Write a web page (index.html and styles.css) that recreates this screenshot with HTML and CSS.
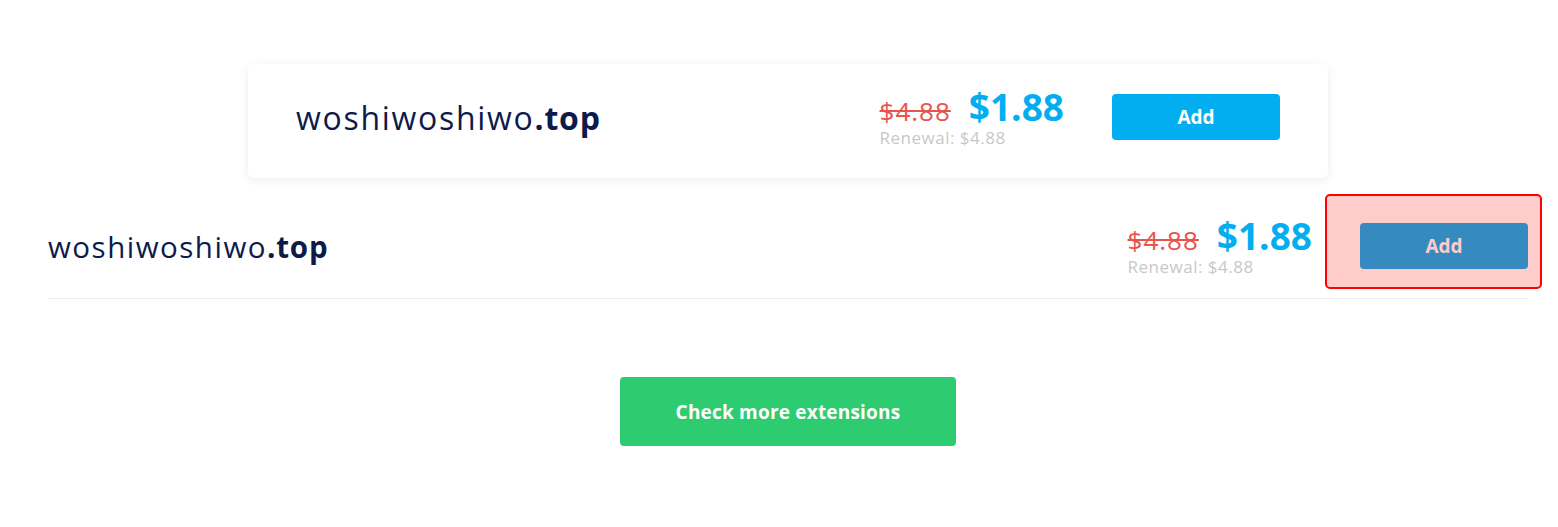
FILE: index.html
```html
<!DOCTYPE html>
<html lang="en">
<head>
<meta charset="utf-8">
<title>Domain search</title>
<link rel="stylesheet" href="styles.css">
</head>
<body>
<div class="page">
  <div class="card">
    <div class="domain">woshiwoshiwo<b>.top</b></div>
    <div class="buy">
      <div class="price">
        <div class="price-line"><s class="old">$4.88</s><span class="now">$1.88</span></div>
        <div class="renew">Renewal: $4.88</div>
      </div>
      <div class="btn-cell"><button class="add">Add</button></div>
    </div>
  </div>

  <div class="row">
    <div class="domain domain-sm">woshiwoshiwo<b>.top</b></div>
    <div class="buy">
      <div class="price">
        <div class="price-line"><s class="old">$4.88</s><span class="now">$1.88</span></div>
        <div class="renew">Renewal: $4.88</div>
      </div>
      <div class="btn-cell"><button class="add">Add</button><span class="highlight"></span></div>
    </div>
  </div>

  <div class="more">
    <button class="green">Check more extensions</button>
  </div>
</div>
</body>
</html>
```

FILE: styles.css
```css
* { box-sizing: border-box; }
html, body { margin: 0; background: #ffffff; }
body { font-family: "Open Sans", "Noto Sans", sans-serif; color: #0d1b4c; }

.page {
  width: 1480px;
  margin-left: 48px;
  padding-top: 64px;
}

.card {
  width: 1080px;
  margin: 0 auto;
  background: #fff;
  border-radius: 6px;
  box-shadow: 0 2px 8px rgba(0, 0, 0, 0.08);
  padding: 23px 48px 31px 48px;
  display: flex;
  align-items: center;
  justify-content: space-between;
}

.domain {
  font-size: 32px;
  font-weight: 400;
  letter-spacing: 1.7px;
  color: #0d1b4c;
}
.domain b { font-weight: 700; letter-spacing: 0.8px; }
.domain-sm { font-size: 29.5px; letter-spacing: 1.5px; }

.buy { display: flex; align-items: center; gap: 48px; }

.price { display: flex; flex-direction: column; }
.price-line { display: flex; align-items: baseline; gap: 18px; line-height: 40px; }
.old { font-size: 26px; letter-spacing: 1px; color: #e9534f; }
.now { font-size: 37px; font-weight: 700; color: #03aef0; }
.renew { font-size: 17px; letter-spacing: 0.5px; color: #c8c8c8; line-height: 18px; margin-top: -2px; }

.btn-cell { position: relative; display: flex; }
.add {
  width: 168px;
  height: 46px;
  border: 0;
  border-radius: 4px;
  background: #03aef0;
  color: #fff;
  font-family: inherit;
  font-size: 19px;
  font-weight: 700;
}

.highlight {
  position: absolute;
  left: -35px;
  top: -29px;
  right: -14px;
  bottom: -20px;
  background: rgba(255, 0, 0, 0.2);
  border: 2px solid #ff0000;
  border-radius: 5px;
  pointer-events: none;
}

.row {
  display: flex;
  align-items: center;
  justify-content: space-between;
  padding: 38px 0 22px 0;
  border-bottom: 1px solid #ececec;
}

.more { display: flex; justify-content: center; padding-top: 78px; }
.green {
  width: 336px;
  height: 69px;
  border: 0;
  border-radius: 4px;
  background: #2ecc71;
  color: #fff;
  font-family: inherit;
  font-size: 19px;
  font-weight: 700;
  letter-spacing: 0.2px;
}
```
